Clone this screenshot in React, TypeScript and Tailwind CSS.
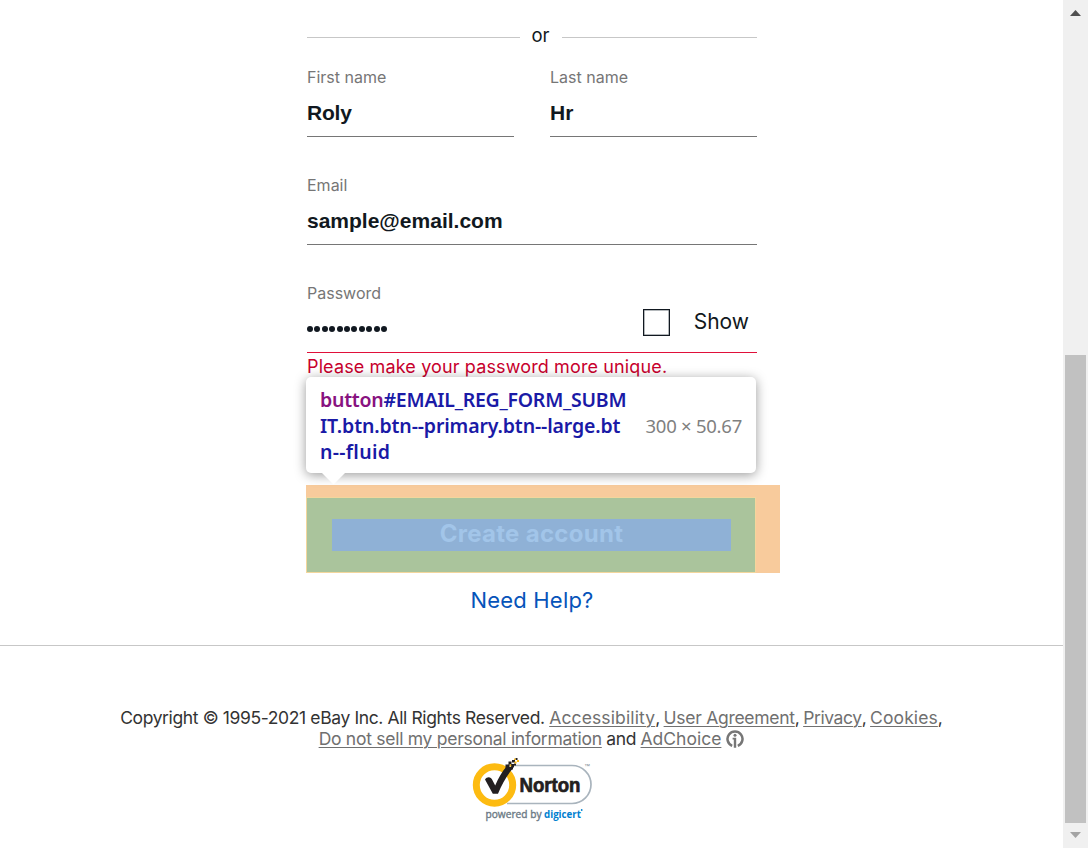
import type { ReactNode } from "react";

const sans = "font-['Inter','Liberation_Sans',sans-serif]";

function Field({
  label,
  error = false,
  className = "w-[450px]",
  children,
}: {
  label: string;
  error?: boolean;
  className?: string;
  children: ReactNode;
}) {
  return (
    <div className={className}>
      <div className="h-[18px] text-[16px] leading-[18px] text-[#767676]">{label}</div>
      <div
        className={`flex h-[51px] items-center justify-between border-b pt-[3px] font-['Liberation_Sans',sans-serif] text-[21px] leading-[26px] font-bold text-[#111820] ${
          error ? "border-[#e0103a]" : "border-[#767676]"
        }`}
      >
        {children}
      </div>
    </div>
  );
}

function Link({ children, className = "" }: { children: ReactNode; className?: string }) {
  return (
    <a className={`text-[#707070] underline decoration-1 underline-offset-[2px] ${className}`}>{children}</a>
  );
}

function AdChoiceIcon() {
  return (
    <svg className="ml-[5px] inline-block align-[-3px]" width="18" height="18" viewBox="0 0 18 18" fill="none">
      <path d="M6.2 15.9A7.5 7.5 0 1 1 11.8 15.9" stroke="#767676" strokeWidth="2.5" />
      <circle cx="9" cy="5.3" r="1.5" fill="#767676" />
      <path d="M6.6 7.7H10.2V17.8H7.8V9.4H6.6Z" fill="#767676" />
    </svg>
  );
}

function NortonSeal() {
  return (
    <svg className="ml-[471px] block" width="124" height="68" viewBox="0 0 124 68">
      <path d="M36 9.5H101A19 19 0 0 1 101 47.5H36" fill="#fff" stroke="#a9b4bd" strokeWidth="1.7" />
      <circle cx="23.5" cy="29" r="18.2" fill="#fff" stroke="#fdbb11" strokeWidth="7" />
      <path
        d="M14 23.5C16 20.4 20 20.6 21.2 23.8L24.2 29.6C27.5 22 31 15.5 36 10L41.5 12.8C35.5 20 31 28 27 37.8H21.8Z"
        fill="#231f20"
      />
      <path d="M34.5 8.5h4v4h-4zM37.5 5.5h3v3h-3zM40 8h3v3.5h-3zM41 4h3v2.5h-3zM44.5 2h2v2h-2zM38 11h4v2.5h-4zM43 7.5h2v2h-2z" fill="#231f20" />
      <path d="M38.8 8.5h1.5v2h-1.5zM43.5 5.5h2v2h-2zM46 4h2v2h-2zM43 2.5h1.5v1.5H43z" fill="#fdbb11" />
      <text x="48.5" y="36" textLength="61" lengthAdjust="spacingAndGlyphs" className="fill-[#231f20] stroke-[#231f20] stroke-[.7px] font-['Liberation_Sans',sans-serif] text-[20px] font-bold">
        Norton
      </text>
      <text x="113" y="12" className="fill-[#7b8790] font-['Liberation_Sans',sans-serif] text-[6px]">™</text>
      <text x="14.5" y="61.5" textLength="56" lengthAdjust="spacingAndGlyphs" className="fill-[#6d7b86] stroke-[#6d7b86] stroke-[.4px] font-['Open_Sans',sans-serif] text-[11px]">
        powered by
      </text>
      <text x="73" y="61.5" textLength="37" lengthAdjust="spacingAndGlyphs" className="fill-[#0080d0] font-['Open_Sans',sans-serif] text-[11px] font-bold">
        digicert
      </text>
      <circle cx="110.7" cy="54" r=".9" fill="#0080d0" />
    </svg>
  );
}

function InspectTooltip() {
  return (
    <div className="absolute -top-[108px] left-0 flex h-[96px] w-[450px] items-center rounded-[5px] bg-white pt-px pl-[14px] font-['Noto_Sans',sans-serif] leading-[26px] shadow-[0_2px_12px_rgba(0,0,0,0.4)]">
      <div className="w-[325.5px] text-[19.5px] font-semibold whitespace-nowrap text-[#1a1aa6]">
        <div className="tracking-[-0.24px]">
          <span className="text-[#881280]">button</span>#EMAIL_REG_FORM_SUBM
        </div>
        <div className="tracking-[-0.14px]">IT.btn.btn--primary.btn--large.bt</div>
        <div className="tracking-[0.3px]">n--fluid</div>
      </div>
      <div className="text-[18.5px] tracking-[-0.25px] whitespace-nowrap text-[#808080]">300 × 50.67</div>
      <svg className="absolute top-[96px] left-[16px]" width="24" height="12" viewBox="0 0 24 12">
        <path d="M0 0H23L11.5 11.5Z" fill="#fff" />
      </svg>
    </div>
  );
}

function Scrollbar() {
  return (
    <div className="flex h-full w-[25px] flex-col items-center bg-[#f0f0f0]">
      <svg className="block" width="25" height="25" viewBox="0 0 25 25">
        <path d="M7 16L12.5 10L18 16Z" fill="#505050" />
      </svg>
      <div className="mt-[330px] h-[468px] w-[21px] bg-[#c1c1c1]" />
      <svg className="block" width="25" height="25" viewBox="0 0 25 25">
        <path d="M7 9L12.5 15L18 9Z" fill="#a3a3a3" />
      </svg>
    </div>
  );
}

export default function App() {
  return (
    <div className={`flex h-[848px] w-[1088px] overflow-hidden bg-white text-[#111820] ${sans}`}>
      <div className="flex w-[1063px] flex-col">
        <main className="ml-[307px] flex w-[450px] flex-col pt-[25px]">
          <div className="flex h-[25px] items-center">
            <div className="h-px w-[213px] bg-[#c7c7c7]" />
            <span className="w-[42px] pr-px pb-[4px] text-center text-[18.5px] leading-[21px]">or</span>
            <div className="h-px flex-1 bg-[#c7c7c7]" />
          </div>
          <div className="mt-[18px] flex justify-between">
            <Field label="First name" className="w-[207px]">
              <span className="tracking-[-0.2px]">Roly</span>
            </Field>
            <Field label="Last name" className="w-[207px]">
              <span>Hr</span>
            </Field>
          </div>
          <div className="mt-[39px]">
            <Field label="Email">
              <span>sample@email.com</span>
            </Field>
          </div>
          <div className="mt-[39px]">
            <Field label="Password" error>
              <span className="flex gap-[1.4px]">
                {Array.from({ length: 11 }, (_, i) => (
                  <i key={i} className="size-[6px] rounded-full bg-[#111820]" />
                ))}
              </span>
              <span className={`flex items-center pr-2 pb-[13px] text-[21px] font-normal ${sans}`}>
                <span className="mr-[24px] size-[27px] border border-[#111820] ring-[0.5px] ring-[#6b7378] ring-inset" />
                Show
              </span>
            </Field>
          </div>
          <div className="h-[26px] text-[18px] leading-[27px] tracking-[0.13px] whitespace-nowrap text-[#c8002d]">
            Please make your password more unique.
          </div>
          <div className="relative mt-[106px] -ml-px h-[88px] w-[474px] bg-[#f8cb9c]">
            <div className="mt-[12px] h-[76px] w-[450px] border border-[#f3d69c] bg-[#aac49c] px-[25px] pt-[21px]">
              <div className="h-[32px] w-[399px] bg-[#8fb1d6] text-center text-[24px] leading-[30px] font-bold tracking-[0.3px] text-[#a2c5e9]">
                Create account
              </div>
            </div>
            <InspectTooltip />
          </div>
          <a className="mt-[12px] h-[30px] text-center text-[22px] leading-[30px] tracking-[0.2px] text-[#0654ba]">
            Need Help?
          </a>
        </main>
        <footer className="mt-[30px] border-t border-[#c7c7c7] pt-[61px] text-[17.5px] leading-[21px] text-[#333]">
          <div className="text-center whitespace-nowrap">
            <span className="tracking-[-0.38px]">Copyright © 1995-2021 eBay Inc. All Rights Reserved. </span>
            <Link className="tracking-[0.13px]">Accessibility</Link>
            <span className="tracking-[-0.8px]">, </span>
            <Link className="tracking-[-0.28px]">User Agreement</Link>
            <span className="tracking-[-0.8px]">, </span>
            <Link className="tracking-[-0.4px]">Privacy</Link>
            <span className="tracking-[-0.8px]">, </span>
            <Link className="tracking-[0.1px]">Cookies</Link>,
          </div>
          <div className="h-[21px] text-center whitespace-nowrap">
            <Link className="tracking-[-0.27px]">Do not sell my personal information</Link>
            <span className="tracking-[-0.4px]"> and </span>
            <Link>AdChoice</Link>
            <AdChoiceIcon />
          </div>
          <div className="mt-[7px]">
            <NortonSeal />
          </div>
        </footer>
      </div>
      <Scrollbar />
    </div>
  );
}
